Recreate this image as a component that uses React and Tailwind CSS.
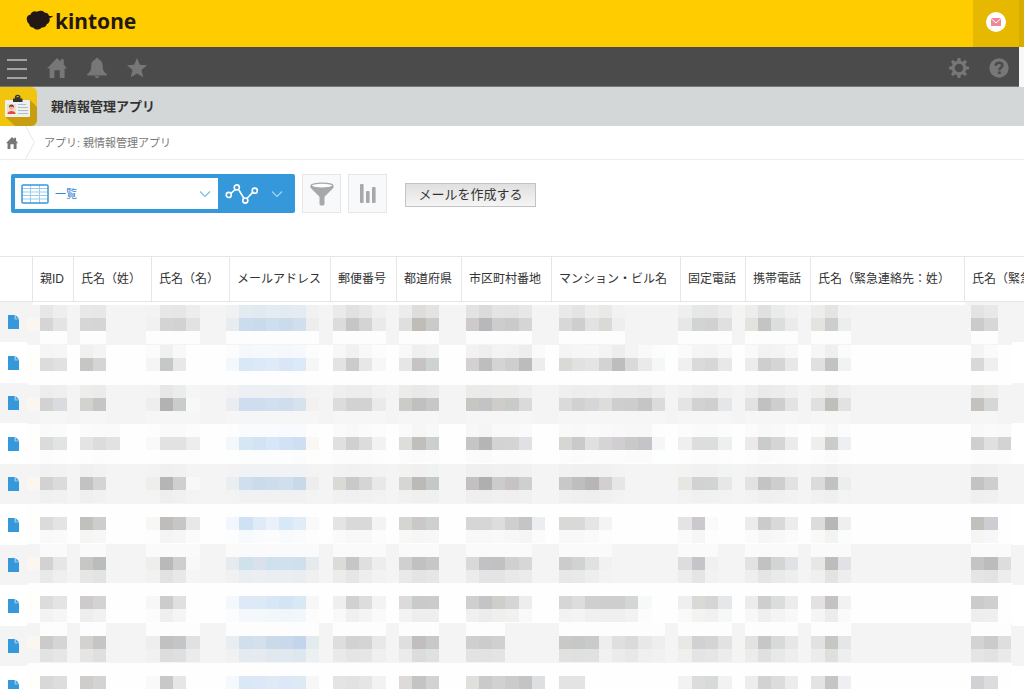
import React from "react";

/* Left edge and width of each column, first tile index and header text. */
const COLUMNS = [
  { label: "親ID", left: 33, width: 41, start: 3 },
  { label: "氏名（姓）", left: 74, width: 78, start: 6 },
  { label: "氏名（名）", left: 152, width: 78, start: 11 },
  { label: "メールアドレス", left: 230, width: 101, start: 17 },
  { label: "郵便番号", left: 331, width: 66, start: 25 },
  { label: "都道府県", left: 397, width: 65, start: 30 },
  { label: "市区町村番地", left: 462, width: 90, start: 35 },
  { label: "マンション・ビル名", left: 552, width: 129, start: 42 },
  { label: "固定電話", left: 681, width: 65, start: 51 },
  { label: "携帯電話", left: 746, width: 65, start: 56 },
  { label: "氏名（緊急連絡先：姓）", left: 811, width: 154, start: 61 },
  { label: "氏名（緊急連絡先：名）", left: 965, width: 154, start: 73 },
];

/* Tile shades of the redacted values: two hex digits for a grey, six for a colour. */
const ROWS = [
  ["d5 e4", "d6 d5", "f1 d4 d2 e2", "e8ecef cbdded c9dbeb cddeee cadbec cfdfed ededed", "dc c6 d4 ea", "df c0bdb9 c9cbc9", "cecacb b8b8ba cd c9cbc9 d5", "d8 ce e0e3e1 d9d9d5 ee", "e7 d2d4d3 d1 e0", "e2e2df c4 dcdedd eb", "e3e3e0 cccecd eceeed", "cb d6d7d9"],
  ["dc e1e1e3", "c8c6c4 d4d6d4", "f5 c5c8c6 e8", "f3f8fd d9e7f6 dce9f8 dfebf9 d8e6f7 dce9f8 f5f7f6", "e3 cbcbce e7 f7", "e6 c7c3c4 cdd2d2", "d3d1d2 bebec0 d4 ce bc eceeed", "dbd9d6 e1 e4 d3 bd d9 ea f5f7f6", "f0 da d7 e8", "eeecea ce d5 e8", "e0 c2 f1f3f2", "d8 ef"],
  ["d2 dadbde", "d4d2cf c3c6c4", "ee b2 cacccb f7f9f7", "ebecf1 cedeee cfdeee d1dfef cfdded d6e3ee f2f1ef", "dc d2 d2 ea", "cbcbc8 c0 c5c8c6", "c6c6c3 c3c3c6 cfccca c9cbc9 da", "da d1 d6d6d9 dddddb ce cd c5 db", "e4 d2 cf e4e6e8", "e2e2e0 c1 ce e3", "e0 bfbebb e2", "c4c1be d5d7d6"],
  ["db e2e3e5", "e4 dc e1e2e4", "f9 e2 e2 eceeed", "f3f8fb d5e7f3 d2e3f4 d8e7f7 d2e2f4 cfdff2 faf8f5", "e0 d0 dc f2", "ddddda c1bfbc cbcfd0", "c5 b5 d3 d4 e0e1e4", "d6d6d3 cacacd e0 d5 d1ced1 c9 c5c5c9 f5f7f6", "efefed dd dbdedc eef0ef", "eceae8 cacccb d5 eb", "eeeeec c9ccc8 eeeff2", "cf e0 d3"],
  ["d2 dadbdd", "c2 d3d5d3", "eeeeec b5 cecfd1 f8", "eaeef0 cfdfed cadcec cdddeb d1dfed c8d9ea ededed", "d9d9d6 c9 d5 e8", "d6d6d4 bbbab7 c3c8c9", "c3c0c1 af cc c7c3c4 cecfd1", "c8c8c9 be b7b5b8 d3cfd1 e6", "e6e6e3 d2 d2d4d3 e5e8e7", "e2e2e0 c4 ce e2", "dadbda bfc2c0 eceeed", "c3 cecdd0"],
  ["db e4", "c2c0bc cbcecc", "f7f7f5 bebdbb c6 e8", "f2f7fd cee1f5 e0ebf7 eaf1fb d9e8f6 e0ecf7 f9f9f9", "e4 d9 d9 f3", "d5d5d2 cac8c9 ced0cf", "d6 d6 dd cf c5 ecedf0", "d9d9d7 d9 e5 f3f5f4", "e4 cbc9cd fa", "ec cb d9 ec", "dddcda b7 eef0ef", "c1c0bc cecdd1"],
  ["d2 e5e6e8", "c8c7c4 babcbe", "eeeeec b9 cecdd0 f8", "e7ebed d0e1ee dae1ed cfe0ee d0e0ec cfdfed e6eaec", "dbdbd8 c6 dee0df ed", "d0 c1 c6c8c7", "d9 c3c1c4 c1c0c2 d0 d7", "cc d1d2d4 e0e2e1 f1", "dd c6c4c8 f0", "e2e2e0 c2 d2d5d3 e1e2e5", "e7e7e5 bd e1e2e5", "c4 bc dd"],
  ["dc e4", "cdcbcc d3", "f7 cc e0e0e2", "f3f8fc dde9f6 dceaf5 d8e7f5 d3e4f4 d8e8f5 f7", "ef d1 dd f3", "dddadb c9cbc9 cb", "cf c4 cfcecb d5d5d8 eceeed", "d6 dd cf ce ce d3d6d4 f7f9f8", "efefef d9d9d5 d5 e6e7e9", "eeecea ce dbdddc ec", "e4e2e0 c4c2c3 f2", "cb cfced1"],
  ["cb d4d5d7", "d4d2cf c3c6c4", "ee c1 c4c5c7 e1", "e8eeef d1dfec d4e0eb cadae9 c9d9eb c3d5ec e4ebec", "de d2 d4 e8", "dfdfe0 c2bebf c6c9c8", "cf cc d0", "c9cac8 c6c8c7 ca ee df da e8 ee", "e8e8e5 d1 d4 e0e3e1", "e4e3e1 c7 d8dad9 e7", "e2 c6c6c3 e5e6e9", "d3 cb de"],
  ["d8 dddde0", "cfcdcb d3", "f9 c8 e6", "f3f9fc dae8f5 dce8f7 dfeaf5 dce8f8 dceaf6 f7", "e4 e2 e5 f2", "dddad8 c4 d1d2d4", "dfdfdc ca d1 cbcbce c4 dedfe2", "e3 e3", "f2 dc d8dad9 f2", "efedeb d2 dc ec", "e5e3e1 c5 eeeff2", "d2d0d4 dcdcdf"],
];

/* Strength of the soft tiles above and below; a negative value lightens. */
const ABOVE = [0.42, 0.25, 0.2, 0.12, 0.06, 0, -0.5, 0, -0.8, 0];
const BELOW = [-0.8, 0, -0.2, 0.05, 0.08, 0.15, 0.3, 0.3, 0.45, 0.2];
const TILE = 13.3;

function toColor(code) {
  return code.length === 2 ? "#" + code + code + code : "#" + code;
}

function Mosaic({ column, row, codes }) {
  const tall = 13;
  const rowTop = 302 + Math.floor(40.5 * row);
  const y = Math.round(318 + 39.78 * row) - rowTop;
  const first = column.start === 3;
  const last = column.start === 73;
  const tiles = codes.split(" ");
  const place = (index) => {
    const x = Math.round((column.start + index) * TILE);
    const next = Math.round((column.start + index + 1) * TILE);
    return { x: x - column.left, width: next - x };
  };
  const soft = (code, strength) => ({
    fill: strength < 0 ? "#ffffff" : toColor(code),
    opacity: Math.abs(strength),
  });
  return (
    <svg className="block h-10 w-full overflow-visible" shapeRendering="crispEdges" aria-hidden="true">
      <rect
        x={first ? -6 : 0}
        y={y - tall}
        width={last ? 47 : column.width + (first ? 6 : 0)}
        height={40}
        fill={row % 2 ? "#fefefe" : "#f4f4f4"}
      />
      {first && <rect x={-6} y={y} width={13} height={tall} fill={row % 2 ? "#fffefb" : "#fcf6f1"} />}
      {tiles.map((code, i) => (
        <g key={i}>
          <rect {...place(i)} y={y - tall} height={tall} {...soft(code, ABOVE[row])} />
          <rect {...place(i)} y={y} height={tall} fill={toColor(code)} />
          <rect {...place(i)} y={y + tall} height={tall} {...soft(code, BELOW[row])} />
        </g>
      ))}
    </svg>
  );
}

function HomeIcon({ className }) {
  return (
    <svg className={className} viewBox="0 0 20 20" fill="currentColor" aria-hidden="true">
      <path d="M10 0 13.600 3.400V1.200h3.200v5.200L20 10.400h-2.400V20h-4.800v-7.800H7.400V20H2.600v-9.600H0Z" />
    </svg>
  );
}

function BellIcon() {
  return (
    <svg className="h-5 w-5" viewBox="0 0 20 20" fill="currentColor" aria-hidden="true">
      <path d="M10 0c1 0 1.600.6 1.700 1.400 2.800.8 4 3.200 4 6 0 5.200 1.500 6.600 3.800 8.300.8.6.6 1.700-.5 1.700H1c-1.100 0-1.300-1.100-.5-1.700 2.300-1.700 3.800-3.100 3.800-8.300 0-2.800 1.200-5.200 4-6C8.400.6 9 0 10 0Z" />
      <path d="M7.500 18.200h5c-.4 1.100-1.300 1.800-2.500 1.800s-2.100-.7-2.500-1.800Z" />
    </svg>
  );
}

function StarIcon() {
  return (
    <svg className="h-5 w-5" viewBox="0 0 20 20" fill="currentColor" aria-hidden="true">
      <path d="m10 0 2.800 6.700 7.200.6-5.500 4.800 1.700 7.100L10 15.400l-6.200 3.800 1.700-7.100L0 7.300l7.200-.6Z" />
    </svg>
  );
}

function GearIcon() {
  return (
    <svg className="h-5 w-5" viewBox="0 0 20 20" aria-hidden="true">
      <circle cx="10" cy="10" r="5.800" fill="none" stroke="currentColor" strokeWidth="3" />
      <g fill="currentColor">
        {[0, 45, 90, 135, 180, 225, 270, 315].map((a) => (
          <path key={a} d="M8 3.500 8.700 0h2.600l.7 3.500Z" transform={`rotate(${a} 10 10)`} />
        ))}
      </g>
    </svg>
  );
}

function HelpIcon() {
  return (
    <svg className="h-5 w-5" viewBox="0 0 20 20" aria-hidden="true">
      <circle cx="10" cy="10" r="9.700" fill="currentColor" />
      <path d="M6.700 7.700C6.800 5.600 8.100 4.700 10 4.700c2 0 3.300 1.100 3.300 2.700 0 2.300-3 2.300-3 4.800" fill="none" stroke="#4b4b4b" strokeWidth="2.600" />
      <rect x="8.900" y="13.400" width="2.800" height="2.600" fill="#4b4b4b" />
    </svg>
  );
}

function AppIcon() {
  return (
    <svg className="h-10 w-[37px] shrink-0" viewBox="0 0 37 40" aria-hidden="true">
      <path d="M0 0h31a6 6 0 0 1 6 6v27a6 6 0 0 1-6 6H0Z" fill="#f1c40f" />
      <path d="m29.500 12.500 7.500 7.500v13a6 6 0 0 1-6 6H15L5.500 30Z" fill="#c99d10" />
      <rect x="5" y="13" width="25" height="17" rx="1" fill="#ecf0f1" />
      <path d="M13 11.500h2.500a2.500 2.500 0 0 1 4.500 0h2.500V15H13Z" fill="#333" />
      <circle cx="17.700" cy="10.600" r="2.200" fill="none" stroke="#333" strokeWidth="1.300" />
      <rect x="7" y="17" width="9" height="10" fill="#f7d9d2" />
      <circle cx="11.500" cy="20.600" r="2.300" fill="#f2b48e" />
      <path d="M9 20.500c-.3-4 5.300-4 5 0-1-1.500-4-1.500-5 0Z" fill="#633d2d" />
      <path d="M7.500 27c0-4 8-4 8 0Z" fill="#e9453c" />
      <path d="M18 17.500h8M18 20.500h10M18 23.500h10M18 26.500h10" stroke="#b3bdc5" strokeWidth="1" />
    </svg>
  );
}

function Chevron({ className }) {
  return (
    <svg className={className} viewBox="0 0 12 8" fill="none" stroke="currentColor" strokeWidth="1.200" aria-hidden="true">
      <path d="m1 1.500 5 5 5-5" />
    </svg>
  );
}

function FileIcon() {
  return (
    <svg className="h-[14px] w-[11px]" viewBox="0 0 11 14" aria-hidden="true">
      <path d="M0 0h7v4h4v10H0Z" fill="#3498db" />
      <path d="M6.500 0 11 4.500H6.500Z" fill="#8fc6ec" />
      <path d="M7.500 0 11 3.500H8.500Z" fill="#3498db" />
    </svg>
  );
}

const NAV_BUTTON = "flex h-full w-10 items-center justify-center pt-[2px]";

function TopBar() {
  return (
    <header className="flex h-[47px] shrink-0 bg-[#ffcc00]">
      <a href="#home" className="flex flex-1 items-start gap-px pt-[6px] pl-[26px] text-[#231815]">
        <svg className="mt-1 h-[22px] w-[28px]" viewBox="0 0 28 22" fill="currentColor" aria-hidden="true">
          <path d="M1 10c-.8-2.800.8-5 3.400-5.200C5.400 1.600 8.400.4 11 1.800c2.500-1.700 6.300-1.500 7.900.9 1.900-.3 3.700 1 4 3 1.300.5 2.400.3 4.300.1-.8 1.300-2 2-3.700 2.300.8 2.700-.3 5.300-2.800 6.100-.6 2.300-2.600 3.600-5 3.300-2.100 2.600-6.300 2.800-8.300.2C4.900 17.600 3.300 16 3.200 14 2 13 1 11.700 1 10Z" />
        </svg>
        <span className="font-['Noto_Sans',sans-serif] text-[21px] leading-[30px] font-bold">kintone</span>
      </a>
      <button type="button" aria-label="メール通知" className="flex w-[46px] items-center justify-center bg-[#e6b800] pb-[3px]">
        <svg className="h-5 w-5" viewBox="0 0 20 20" aria-hidden="true">
          <circle cx="10" cy="10" r="10" fill="#fff" />
          <rect x="5" y="6" width="10" height="8" fill="#ee8799" />
          <path d="m5 6.500 5 4.500 5-4.500" fill="none" stroke="#fff" strokeWidth="1" />
        </svg>
      </button>
      <div className="w-[5px] bg-[#d9ad00]" />
    </header>
  );
}

function NavBar() {
  return (
    <div className="flex h-10 shrink-0 bg-[#f8f8f8]">
      <nav className="flex flex-1 items-center border-b border-[#777] bg-[#4b4b4b] text-[#777]">
        <button type="button" aria-label="メニュー" className="flex h-full w-[37px] items-center pt-1 pl-[7px] text-[#a3a3a3]">
          <svg className="h-5 w-5" viewBox="0 0 20 20" fill="currentColor" aria-hidden="true">
            <path d="M0 0h20v2H0ZM0 9h20v2H0ZM0 18h20v2H0Z" />
          </svg>
        </button>
        <button type="button" aria-label="ポータル" className={NAV_BUTTON}>
          <HomeIcon className="h-5 w-5" />
        </button>
        <button type="button" aria-label="通知" className={NAV_BUTTON}>
          <BellIcon />
        </button>
        <button type="button" aria-label="お気に入り" className={NAV_BUTTON}>
          <StarIcon />
        </button>
        <div className="flex-1" />
        <button type="button" aria-label="設定" className={NAV_BUTTON}>
          <GearIcon />
        </button>
        <button type="button" aria-label="ヘルプ" className={NAV_BUTTON}>
          <HelpIcon />
        </button>
      </nav>
      <div className="w-[5px]" />
    </div>
  );
}

function Toolbar() {
  return (
    <div className="flex h-[96px] shrink-0 items-start gap-[7px] pt-[14px] pl-[11px]">
      <div className="flex h-[39px] w-[284px] rounded-[2px] bg-[#3498db]">
        <label className="my-1 ml-1 flex w-[203px] items-center gap-[6px] bg-white pr-[7px] pl-[6px] text-[#3498db]">
          <svg className="h-5 w-7 shrink-0" viewBox="0 0 28 20" fill="none" stroke="currentColor" aria-hidden="true">
            <path d="M1 4.500h26M1 8h26M1 11.500h26M1 15h26M9.500 1v18M18.500 1v18" stroke="#9bcbed" />
            <rect x="1" y="1" width="26" height="18" rx="1" strokeWidth="1.500" />
          </svg>
          <select aria-label="一覧の選択" className="min-w-0 flex-1 appearance-none bg-transparent pt-[2px] text-[11px] text-[#3f88d2]">
            <option>一覧</option>
          </select>
          <Chevron className="h-2 w-3 text-[#7cbbe8]" />
        </label>
        <button type="button" aria-label="グラフ" className="flex flex-1 items-center gap-3 pl-[7px] text-white">
          <svg className="h-[22px] w-[34px]" viewBox="0 0 36 22" fill="none" stroke="currentColor" strokeWidth="1.700" aria-hidden="true">
            <path d="m6 10.500 4.500-4M14.500 6.500l5.500 9M23.500 15.500l6.500-7" />
            <circle cx="4" cy="12" r="2.700" />
            <circle cx="12.500" cy="4" r="2.700" />
            <circle cx="21.500" cy="18" r="2.700" />
            <circle cx="31.500" cy="7.500" r="2.700" />
          </svg>
          <Chevron className="h-2 w-3 text-[#a9d3f1]" />
        </button>
      </div>
      <button type="button" aria-label="絞り込む" className="flex h-[39px] w-[39px] items-center justify-center border border-[#e3e7e8] bg-[#f7f9fa] text-[#a8a8a8]">
        <svg className="h-6 w-6" viewBox="0 0 24 24" fill="currentColor" aria-hidden="true">
          <path d="M.5 3.500v2.300l9 9V22c0 2 5 2 5 0v-7.200l9-9V3.500Z" />
          <ellipse cx="12" cy="3.600" rx="10.800" ry="2.500" fill="#fff" stroke="currentColor" strokeWidth="1.400" />
        </svg>
      </button>
      <button type="button" aria-label="グラフで表示" className="flex h-[39px] w-[39px] items-center justify-center border border-[#e3e7e8] bg-[#f7f9fa] text-[#a8a8a8]">
        <svg className="h-5 w-4" viewBox="0 0 16 20" fill="currentColor" aria-hidden="true">
          <rect x="0" y="0" width="3.600" height="19" rx="1" />
          <rect x="6" y="7" width="3.600" height="12" rx="1" />
          <rect x="12" y="3" width="3.600" height="16" rx="1" />
        </svg>
      </button>
      <button type="button" className="mt-[9px] ml-[11px] flex h-6 w-[131px] items-center justify-center border border-[#c3c3c3] bg-linear-to-b from-[#e0e0e0] to-[#f5f5f5] text-[13px] whitespace-nowrap text-[#333]">
        メールを作成する
      </button>
    </div>
  );
}

function RecordTable() {
  return (
    <table className="w-[1119px] shrink-0 table-fixed border-separate border-spacing-0">
      <colgroup>
        <col className="w-[33px]" />
        <col className="w-[41px]" />
        <col className="w-[78px]" />
        <col className="w-[78px]" />
        <col className="w-[101px]" />
        <col className="w-[66px]" />
        <col className="w-[65px]" />
        <col className="w-[90px]" />
        <col className="w-[129px]" />
        <col className="w-[65px]" />
        <col className="w-[65px]" />
        <col className="w-[154px]" />
        <col className="w-[154px]" />
      </colgroup>
      <thead>
        <tr className="h-[46px]">
          <th aria-label="詳細" className="border-y border-r border-[#e3e7e8] p-0" />
          {COLUMNS.map((column) => (
            <th
              key={column.label}
              scope="col"
              className="border-y border-r border-[#e3e7e8] p-0 pl-[7px] text-left text-[12px] font-normal whitespace-nowrap"
            >
              {column.label}
            </th>
          ))}
        </tr>
      </thead>
      <tbody>
        {ROWS.map((cells, row) => (
          <tr key={row} className="group odd:h-10 even:h-[41px]">
            <td className="p-0 pl-2 group-odd:bg-[#f4f4f4]">
              <a href={"#record-" + (row + 1)} aria-label="レコードの詳細" className="flex">
                <FileIcon />
              </a>
            </td>
            {cells.map((codes, i) => (
              <td key={i} className="p-0 align-top last:group-odd:bg-[#f4f4f4]">
                <Mosaic column={COLUMNS[i]} row={row} codes={codes} />
              </td>
            ))}
          </tr>
        ))}
      </tbody>
    </table>
  );
}

export default function App() {
  return (
    <div className="flex h-screen flex-col overflow-hidden bg-white font-['Liberation_Sans','Noto_Sans_CJK_JP',sans-serif] text-[#333]">
      <TopBar />
      <NavBar />
      <div className="flex h-[39px] shrink-0 items-center gap-[14px] bg-[#d3d7d7]">
        <AppIcon />
        <h1 className="text-[13px] font-bold">親情報管理アプリ</h1>
      </div>
      <div className="flex h-[34px] shrink-0 items-center border-b border-[#eceeee] text-[#777]">
        <a href="#portal" aria-label="ポータル" className="pl-[6px]">
          <HomeIcon className="h-3 w-3" />
        </a>
        <svg className="ml-[7px] h-[33px] w-[10px]" viewBox="0 0 10 33" fill="none" stroke="#e3e7e8" aria-hidden="true">
          <path d="m.5 0 9 16.500-9 16.500" />
        </svg>
        <a href="#app" className="pt-[2px] pl-[9px] text-[11px]">
          アプリ: 親情報管理アプリ
        </a>
      </div>
      <Toolbar />
      <RecordTable />
    </div>
  );
}
